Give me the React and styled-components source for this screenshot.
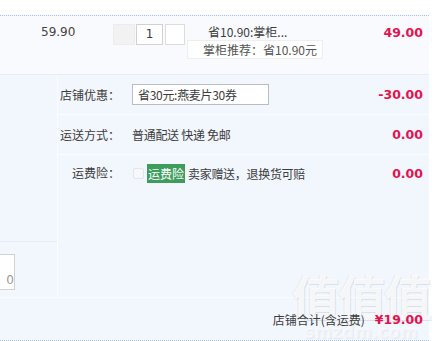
import React from "react";
import styled, { createGlobalStyle } from "styled-components";

const GlobalStyle = createGlobalStyle`
  html, body {
    margin: 0;
    padding: 0;
    background: #fff;
  }
  body {
    font-family: "Noto Sans CJK SC", "DejaVu Sans", sans-serif;
    font-size: 12px;
    color: #3c3c3c;
  }
`;

const Cart = styled.div`
  width: 429px;
  margin-top: 15px;
  border-top: 1px dotted #a9c3e6;
  border-bottom: 1px dotted #a9c3e6;
  background: #f2f6fd;
  position: relative;
`;

const ItemRow = styled.div`
  display: flex;
  align-items: flex-start;
  height: 58px;
  background: #f9fafe;
  border-bottom: 1px solid #e9edf5;
  padding-left: 41px;
  padding-right: 6px;
`;

const Price = styled.div`
  width: 72px;
  padding-top: 9px;
  font-family: "DejaVu Sans", sans-serif;
  font-size: 12px;
  color: #444;
`;

const Quantity = styled.div`
  display: flex;
  padding-top: 8px;
`;

const QtyBtn = styled.div`
  box-sizing: border-box;
  width: ${(p) => (p.$wide ? 22 : 20)}px;
  height: 21px;
  margin-right: ${(p) => p.$gap || 0}px;
  border: 1px solid ${(p) => (p.$disabled ? "#ececec" : "#dcdcdc")};
  background: ${(p) => (p.$disabled ? "#f2f2f2" : "#fff")};
`;

const QtyInput = styled.div`
  box-sizing: border-box;
  width: 27px;
  height: 21px;
  margin-right: 2px;
  border: 1px solid #d2d2d2;
  background: #fff;
  font-family: "DejaVu Sans", sans-serif;
  font-size: 12px;
  text-align: center;
  line-height: 19px;
`;

const Promo = styled.div`
  margin-left: 2px;
  padding-top: 8px;
  width: 150px;
`;

const PromoTitle = styled.div`
  padding-left: 21px;
  height: 16px;
  line-height: 16px;
  white-space: nowrap;
`;

const PromoTip = styled.div`
  display: inline-block;
  padding: 0 5px 0 15px;
  height: 17px;
  line-height: 17px;
  background: #fff;
  border: 1px solid #eeeeee;
  color: #555;
  white-space: nowrap;
`;

const Amount = styled.div`
  margin-left: auto;
  padding-top: ${(p) => p.$top || 0}px;
  font-family: "DejaVu Sans", sans-serif;
  font-weight: bold;
  font-size: 12.5px;
  color: #e3134e;
  white-space: nowrap;
`;

const Body = styled.div`
  display: flex;
  height: 222px;
  border-bottom: 1px solid #fbfcff;
`;

const LeftCol = styled.div`
  width: 57px;
  border-right: 1px solid #fbfcff;
  display: flex;
  flex-direction: column;
`;

const LeftTop = styled.div`
  height: 166px;
  border-bottom: 1px solid #e6ebf5;
`;

const LeftInput = styled.div`
  box-sizing: border-box;
  margin-top: 12px;
  margin-left: -2px;
  width: 17px;
  height: 36px;
  background: #fff;
  border: 1px solid #d2d2d2;
  color: #999;
  font-family: "DejaVu Sans", sans-serif;
  font-size: 12px;
  display: flex;
  align-items: flex-end;
  justify-content: flex-end;
  overflow: hidden;
  line-height: 14px;
  padding-bottom: 2px;
`;

const RightCol = styled.div`
  flex: 1;
  display: flex;
  flex-direction: column;
`;

const Row = styled.div`
  display: flex;
  align-items: ${(p) => (p.$top ? "flex-start" : "center")};
  height: ${(p) => (p.$h ? `${p.$h}px` : "auto")};
  flex: ${(p) => (p.$grow ? 1 : "none")};
  padding-top: ${(p) => p.$pt || 0}px;
  padding-right: 6px;
  border-bottom: ${(p) => (p.$last ? "none" : "1px solid #fbfcff")};
`;

const Label = styled.div`
  width: 62px;
  text-align: right;
  white-space: nowrap;
`;

const Value = styled.div`
  margin-left: 12px;
  display: flex;
  align-items: center;
  white-space: nowrap;
  letter-spacing: -0.3px;
`;

const Select = styled.div`
  box-sizing: border-box;
  width: 137px;
  height: 21px;
  line-height: 19px;
  padding-left: 5px;
  background: #fff;
  border: 1px solid #b9bcc2;
`;

const Check = styled.span`
  box-sizing: border-box;
  display: inline-block;
  width: 11px;
  height: 11px;
  margin: 0 3px 0 1px;
  border: 1px solid #e2e5ea;
  border-radius: 2px;
  background: #f7f8fa;
`;

const Tag = styled.span`
  display: inline-block;
  padding: 0 1px;
  height: 19px;
  line-height: 19px;
  background: #3e9c5c;
  color: #fff;
  margin-right: 3px;
  letter-spacing: 0;
`;

const Footer = styled.div`
  position: relative;
  z-index: 1;
  display: flex;
  justify-content: flex-end;
  align-items: center;
  height: 42px;
  padding-right: 6px;
`;

const FooterLabel = styled.span`
  margin-right: 10px;
  color: #3c3c3c;
`;

const Total = styled.span`
  font-family: "DejaVu Sans", sans-serif;
  font-weight: bold;
  font-size: 12.5px;
  color: #e3134e;
`;

const Watermark = styled.div`
  position: absolute;
  right: -2px;
  bottom: -1px;
  width: 140px;
  text-align: center;
  pointer-events: none;
  color: rgba(255, 255, 255, 0.8);
  text-shadow: 1px 1px 0 rgba(180, 186, 196, 0.35), -1px 0 0 rgba(200, 205, 212, 0.3);
`;

const WmBig = styled.div`
  font-size: 48px;
  font-weight: bold;
  line-height: 56px;
  letter-spacing: -2px;
`;

const WmSmall = styled.div`
  font-family: "DejaVu Sans", sans-serif;
  font-size: 17px;
  font-weight: bold;
  line-height: 18px;
  color: rgba(255, 255, 255, 0.5);
  text-shadow: 1px 1px 0 rgba(190, 196, 206, 0.25);
`;

export default function App() {
  return (
    <>
      <GlobalStyle />
      <Cart>
        <ItemRow>
          <Price>59.90</Price>
          <Quantity>
            <QtyBtn $wide $disabled $gap={1} />
            <QtyInput>1</QtyInput>
            <QtyBtn />
          </Quantity>
          <Promo>
            <PromoTitle>省10.90:掌柜...</PromoTitle>
            <PromoTip>掌柜推荐：省10.90元</PromoTip>
          </Promo>
          <Amount $top={9}>49.00</Amount>
        </ItemRow>
        <Body>
          <LeftCol>
            <LeftTop />
            <LeftInput>0</LeftInput>
          </LeftCol>
          <RightCol>
            <Row $h={39}>
              <Label>店铺优惠：</Label>
              <Value>
                <Select>省30元:燕麦片30券</Select>
              </Value>
              <Amount>-30.00</Amount>
            </Row>
            <Row $h={39}>
              <Label>运送方式：</Label>
              <Value>普通配送 快递 免邮</Value>
              <Amount>0.00</Amount>
            </Row>
            <Row $top $grow $last $pt={9}>
              <Label>运费险：</Label>
              <Value>
                <Check />
                <Tag>运费险</Tag>
                卖家赠送，退换货可赔
              </Value>
              <Amount $top={2}>0.00</Amount>
            </Row>
          </RightCol>
        </Body>
        <Watermark aria-hidden="true">
          <WmBig>值值值</WmBig>
          <WmSmall>smzdm.com</WmSmall>
        </Watermark>
        <Footer>
          <FooterLabel>店铺合计(含运费)</FooterLabel>
          <Total>¥19.00</Total>
        </Footer>
      </Cart>
    </>
  );
}
